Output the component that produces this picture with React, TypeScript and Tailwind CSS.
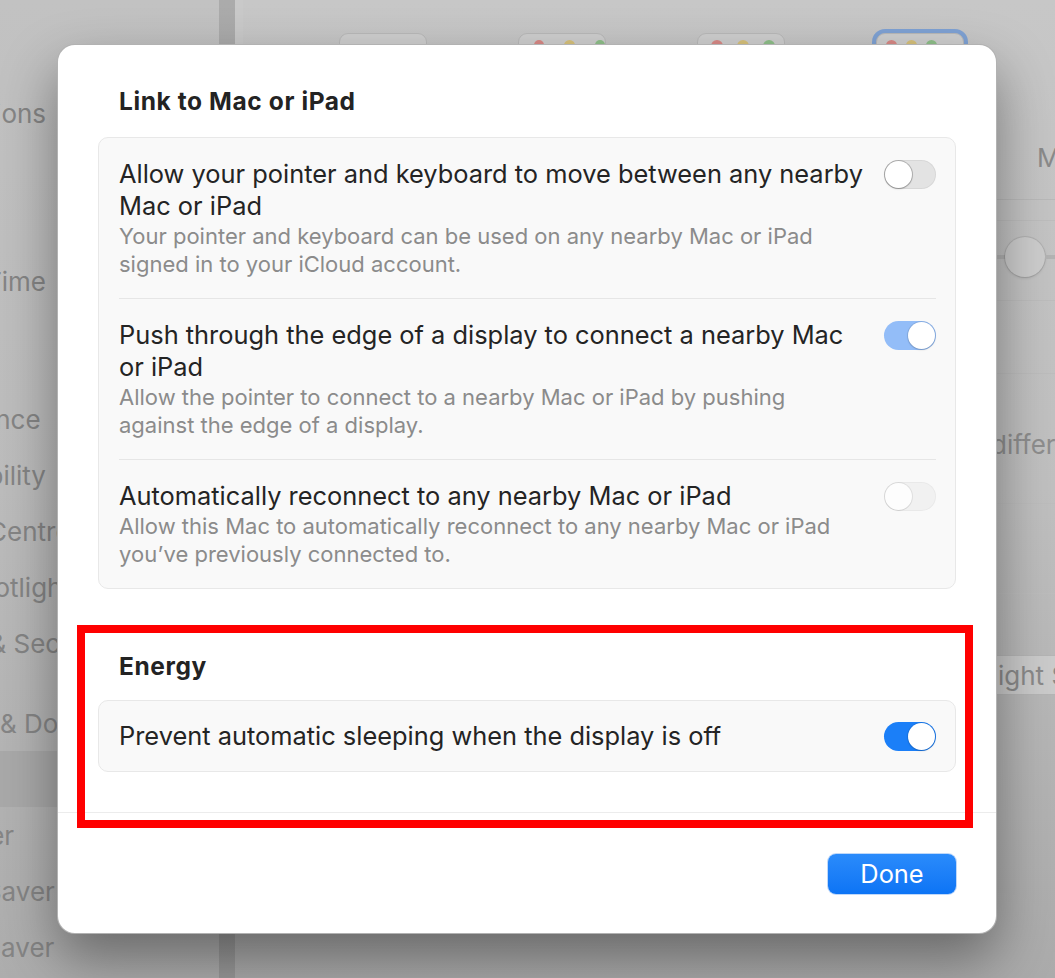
import React from "react";

type ToggleState = "off" | "onLight" | "offFaded" | "on";

function Toggle({ state }: { state: ToggleState }) {
  const track =
    state === "on"
      ? "bg-[#1b7ff8] justify-end"
      : state === "onLight"
        ? "bg-[#93bdf8] justify-end"
        : state === "offFaded"
          ? "bg-[#f1f1f1] justify-start shadow-[inset_0_0_0_1px_rgba(0,0,0,0.03)]"
          : "bg-[#e3e3e3] justify-start shadow-[inset_0_0_0_1px_rgba(0,0,0,0.05)]";
  const knob =
    state === "offFaded"
      ? "bg-[#fdfdfd] shadow-[0_0_0_1px_rgba(0,0,0,0.07),0_1px_1px_rgba(0,0,0,0.05)]"
      : state === "off"
        ? "bg-white shadow-[0_0_0_1px_rgba(0,0,0,0.2),0_1px_2px_rgba(0,0,0,0.18)]"
        : "bg-white shadow-[0_0_0_1px_rgba(0,0,0,0.08),0_1px_2px_rgba(0,0,0,0.15)]";
  return (
    <div className={`flex h-[29px] w-[52px] shrink-0 items-center rounded-full p-[1px] ${track}`}>
      <div className={`h-[27px] w-[27px] rounded-full ${knob}`} />
    </div>
  );
}

function SettingRow({
  title,
  detail,
  toggle,
  last,
}: {
  title: string[];
  detail: string[];
  toggle: ToggleState;
  last?: boolean;
}) {
  return (
    <div className={`flex items-start gap-[20px] py-[20px] ${last ? "" : "border-b border-[#e6e6e6]"}`}>
      <div className="flex-1">
        {title.map((line) => (
          <div key={line} className="whitespace-nowrap text-[25.4px] leading-[32px] text-[#242424]">
            {line}
          </div>
        ))}
        {detail.map((line) => (
          <div key={line} className="whitespace-nowrap text-[22px] leading-[28px] text-[#8b8b8b]">
            {line}
          </div>
        ))}
      </div>
      <div className="mt-[2px]">
        <Toggle state={toggle} />
      </div>
    </div>
  );
}

const sidebarTop = ["Notifications", "Sound", "Focus", "Screen Time"];
const sidebarMid = [
  "General",
  "Appearance",
  "Accessibility",
  "Control Centre",
  "Siri & Spotlight",
  "Privacy & Security",
];
const sidebarBottom = ["Desktop & Dock", "Displays", "Wallpaper", "Screen Saver", "Energy Saver"];

function SidebarItem({ label, selected }: { label: string; selected?: boolean }) {
  return (
    <div className={`flex h-[56px] items-center ${selected ? "bg-[#a9a9a9]" : ""}`}>
      <span className="ml-[-109px] whitespace-nowrap text-[26px] text-[#858585]">{label}</span>
    </div>
  );
}

function Thumb({ dots, selected }: { dots?: { gap: string; size: string; pl: string }; selected?: boolean }) {
  return (
    <div
      className={`h-[60px] w-[88px] shrink-0 rounded-[9px] border border-[#b9b9b9] bg-[#cfcfcf] ${
        selected ? "shadow-[0_0_0_4px_#7fa2d4]" : ""
      }`}
    >
      {dots && (
        <div className={`flex pt-[6px] ${dots.gap} ${dots.pl}`}>
          <div className={`rounded-full bg-[#d98a86] ${dots.size}`} />
          <div className={`rounded-full bg-[#d8c27c] ${dots.size}`} />
          <div className={`rounded-full bg-[#8fc08a] ${dots.size}`} />
        </div>
      )}
    </div>
  );
}

export default function App() {
  return (
    <div className="relative h-[978px] w-[1055px] overflow-hidden bg-[#c3c3c3] font-[family-name:Inter,sans-serif]">
      {/* background window */}
      <div className="flex h-full">
        <div className="flex w-[219px] shrink-0 flex-col overflow-hidden bg-gradient-to-b from-[#c2c2c2] via-[#bcbcbc] to-[#adadad] pt-[85px]">
          {sidebarTop.map((l) => (
            <SidebarItem key={l} label={l} />
          ))}
          <div className="h-[26px]" />
          {sidebarMid.map((l) => (
            <SidebarItem key={l} label={l} />
          ))}
          <div className="h-[24px]" />
          {sidebarBottom.map((l) => (
            <SidebarItem key={l} label={l} selected={l === "Displays"} />
          ))}
        </div>
        <div className="w-[16px] shrink-0 bg-gradient-to-b from-[#ababab] to-[#999999]" />
        <div className="flex flex-1 flex-col bg-gradient-to-b from-[#c7c7c7] via-[#c0c0c0] to-[#ababab]">
          <div className="flex h-[100px] shrink-0 items-start gap-[91px] border-l-[8px] border-[#c9c9c9] pl-[96px] pt-[33px]">
            <Thumb />
            <Thumb dots={{ gap: "gap-[20px]", size: "h-[14px] w-[14px]", pl: "pl-[15px]" }} />
            <Thumb dots={{ gap: "gap-[14px]", size: "h-[12px] w-[12px]", pl: "pl-[13px]" }} />
            <Thumb selected dots={{ gap: "gap-[9px]", size: "h-[11px] w-[11px]", pl: "pl-[9px]" }} />
          </div>
          <div className="flex flex-1">
            <div className="flex-1" />
            <div className="flex w-[58px] shrink-0 flex-col overflow-hidden">
              <div className="h-[100px] border-b border-[#b9b9b9] pl-[40px] pt-[44px] text-[26px] leading-[28px] text-[#8a8a8a]">
                <span className="whitespace-nowrap">Main</span>
              </div>
              <div className="h-[21px] border-b border-[#bdbdbd]" />
              <div className="h-[80px] border-b border-[#bdbdbd] pt-[16px]">
                <div className="flex h-[40px] items-center">
                  <div className="h-[4px] w-[8px] bg-[#b3b3b3]" />
                  <div className="h-[40px] w-[40px] shrink-0 rounded-full bg-[#cdcdcd] shadow-[0_0_0_1px_rgba(0,0,0,0.08),0_1px_3px_rgba(0,0,0,0.15)]" />
                  <div className="h-[4px] flex-1 bg-[#b3b3b3]" />
                </div>
              </div>
              <div className="h-[73px] border-b border-[#bdbdbd]" />
              <div className="h-[130px] border-b border-[#bdbdbd] pt-[57px]">
                <span className="ml-[-6px] whitespace-nowrap text-[26px] leading-[28px] text-[#8e8e8e]">
                  different
                </span>
              </div>
              <div className="h-[90px] border-b border-[#bdbdbd]" />
              <div className="mt-[61px] flex h-[40px] items-center border-y border-[#b5b5b5] bg-[#cbcbcb]">
                <span className="whitespace-nowrap pl-[1px] text-[26px] text-[#8a8a8a]">ight Shift…</span>
              </div>
            </div>
          </div>
        </div>
      </div>

      {/* sheet */}
      <div className="absolute left-[57px] top-[44px] flex h-[890px] w-[940px] flex-col rounded-[18px] border border-[rgba(0,0,0,0.3)] bg-white shadow-[0_25px_55px_rgba(0,0,0,0.4)]">
        <div className="px-[40px] pt-[41px] pb-[40px]">
          <h2 className="pl-[21px] text-[24.5px] font-bold leading-[30px] tracking-[0.6px] text-[#232323]">
            Link to Mac or iPad
          </h2>
          <div className="mt-[21px] rounded-[10px] border border-[#e8e8e8] bg-[#f9f9f9] pl-[20px] pr-[19px]">
            <SettingRow
              title={["Allow your pointer and keyboard to move between any nearby", "Mac or iPad"]}
              detail={["Your pointer and keyboard can be used on any nearby Mac or iPad", "signed in to your iCloud account."]}
              toggle="off"
            />
            <SettingRow
              title={["Push through the edge of a display to connect a nearby Mac", "or iPad"]}
              detail={["Allow the pointer to connect to a nearby Mac or iPad by pushing", "against the edge of a display."]}
              toggle="onLight"
            />
            <SettingRow
              title={["Automatically reconnect to any nearby Mac or iPad"]}
              detail={["Allow this Mac to automatically reconnect to any nearby Mac or iPad", "you\u2019ve previously connected to."]}
              toggle="offFaded"
              last
            />
          </div>
          <h2 className="mt-[62px] pl-[21px] text-[24.5px] font-bold leading-[30px] tracking-[0.6px] text-[#232323]">
            Energy
          </h2>
          <div className="mt-[19px] flex h-[72px] items-center gap-[20px] rounded-[10px] border border-[#e8e8e8] bg-[#f9f9f9] pl-[20px] pr-[19px]">
            <div className="flex-1 whitespace-nowrap text-[25.4px] leading-[32px] text-[#242424]">
              Prevent automatic sleeping when the display is off
            </div>
            <Toggle state="on" />
          </div>
        </div>
        <div className="flex justify-end border-t border-[#ececec] px-[40px] pt-[41px]">
          <button className="flex h-[40px] w-[128px] items-center justify-center rounded-[8px] bg-gradient-to-b from-[#2a8bfb] to-[#0c74f5] text-[25.4px] text-white shadow-[0_0_0_1px_rgba(0,100,230,0.25)]">
            Done
          </button>
        </div>
      </div>

      {/* annotation */}
      <div className="absolute left-[77px] top-[625px] h-[203px] w-[896px] border-[8px] border-[#ff0000]" />
    </div>
  );
}
